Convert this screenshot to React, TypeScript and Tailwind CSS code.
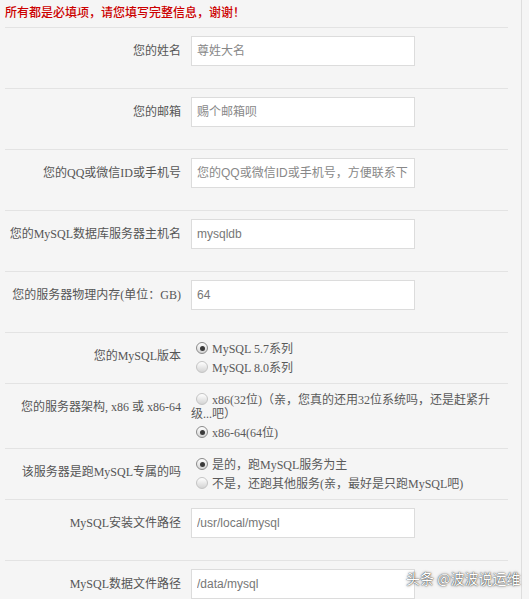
import React from "react";

const FONT = "font-['Liberation_Serif','Noto_Sans_CJK_SC',serif]";
const INPUT_FONT = "font-['Liberation_Sans','Noto_Sans_CJK_SC',sans-serif]";

interface InputRowProps {
  label: string;
  value?: string;
  placeholder?: string;
}

interface RadioOption {
  label: string;
  checked?: boolean;
}

function Radio({ checked }: { checked?: boolean }) {
  return (
    <span
      className={`relative inline-block w-[12px] h-[12px] rounded-full border align-[-1px] ml-[5px] mr-[4px] bg-gradient-to-b from-[#ffffff] to-[#d4d4d4] ${
        checked ? "border-[#8a8a8a]" : "border-[#c4c4c4]"
      }`}
    >
      {checked && (
        <span className="absolute left-[2.5px] top-[2.5px] w-[5px] h-[5px] rounded-full bg-[#3a3a3a]" />
      )}
    </span>
  );
}

function InputRow({ label, value, placeholder }: InputRowProps) {
  return (
    <div className="flex border-t border-[#e3e3e3] pt-[8px] pb-[22px]">
      <div className="w-[186px] shrink-0 pr-[10px] text-right text-[12px] leading-[14px] text-[#555] pt-[8px]">
        {label}
      </div>
      <input
        className={`w-[224px] h-[30px] border border-[#dcdcdc] bg-white px-[5px] text-[12px] text-[#777] placeholder:text-[#888] outline-none ${INPUT_FONT}`}
        defaultValue={value}
        placeholder={placeholder}
      />
    </div>
  );
}

function RadioRow({ label, options }: { label: string; options: RadioOption[] }) {
  return (
    <div className="flex border-t border-[#e3e3e3] pt-[9px] pb-[8px]">
      <div className="w-[186px] shrink-0 pr-[10px] text-right text-[12px] leading-[14px] text-[#555] pt-[7px]">
        {label}
      </div>
      <div className="flex-1 pr-[10px] flex flex-col gap-[5px]">
        {options.map((o) => (
          <div key={o.label} className="text-[12px] leading-[14px] text-[#5a5a5a]">
            <Radio checked={o.checked} />
            {o.label}
          </div>
        ))}
      </div>
    </div>
  );
}

export default function App() {
  return (
    <div className={`relative min-h-[599px] bg-[#f5f5f5] overflow-hidden ${FONT}`}>
      <div className="w-[522px] h-[599px] border-r border-[#dedede]">
        <p className="h-[27px] leading-[27px] pl-[5px] text-[12px] text-[#cc0000] font-medium">
          所有都是必填项，请您填写完整信息，谢谢！
        </p>
        <div className="ml-[5px] w-[503px]">
          <InputRow label="您的姓名" placeholder="尊姓大名" />
          <InputRow label="您的邮箱" placeholder="赐个邮箱呗" />
          <InputRow label="您的QQ或微信ID或手机号" placeholder="您的QQ或微信ID或手机号，方便联系下" />
          <InputRow label="您的MySQL数据库服务器主机名" value="mysqldb" />
          <InputRow label="您的服务器物理内存(单位：GB)" value="64" />
          <RadioRow
            label="您的MySQL版本"
            options={[
              { label: "MySQL 5.7系列", checked: true },
              { label: "MySQL 8.0系列" },
            ]}
          />
          <RadioRow
            label="您的服务器架构, x86 或 x86-64"
            options={[
              { label: "x86(32位)（亲，您真的还用32位系统吗，还是赶紧升级...吧）" },
              { label: "x86-64(64位)", checked: true },
            ]}
          />
          <RadioRow
            label="该服务器是跑MySQL专属的吗"
            options={[
              { label: "是的，跑MySQL服务为主", checked: true },
              { label: "不是，还跑其他服务(亲，最好是只跑MySQL吧)" },
            ]}
          />
          <InputRow label="MySQL安装文件路径" value="/usr/local/mysql" />
          <InputRow label="MySQL数据文件路径" value="/data/mysql" />
        </div>
      </div>
      {/* watermark */}
      <div className="absolute left-[406px] top-[569px] text-[14px] leading-[18px] text-white font-['Noto_Sans_CJK_SC',sans-serif] [text-shadow:0_0_1px_rgba(0,0,0,0.9),0_0_3px_rgba(0,0,0,0.6)]">
        头条 @波波说运维
      </div>
    </div>
  );
}
